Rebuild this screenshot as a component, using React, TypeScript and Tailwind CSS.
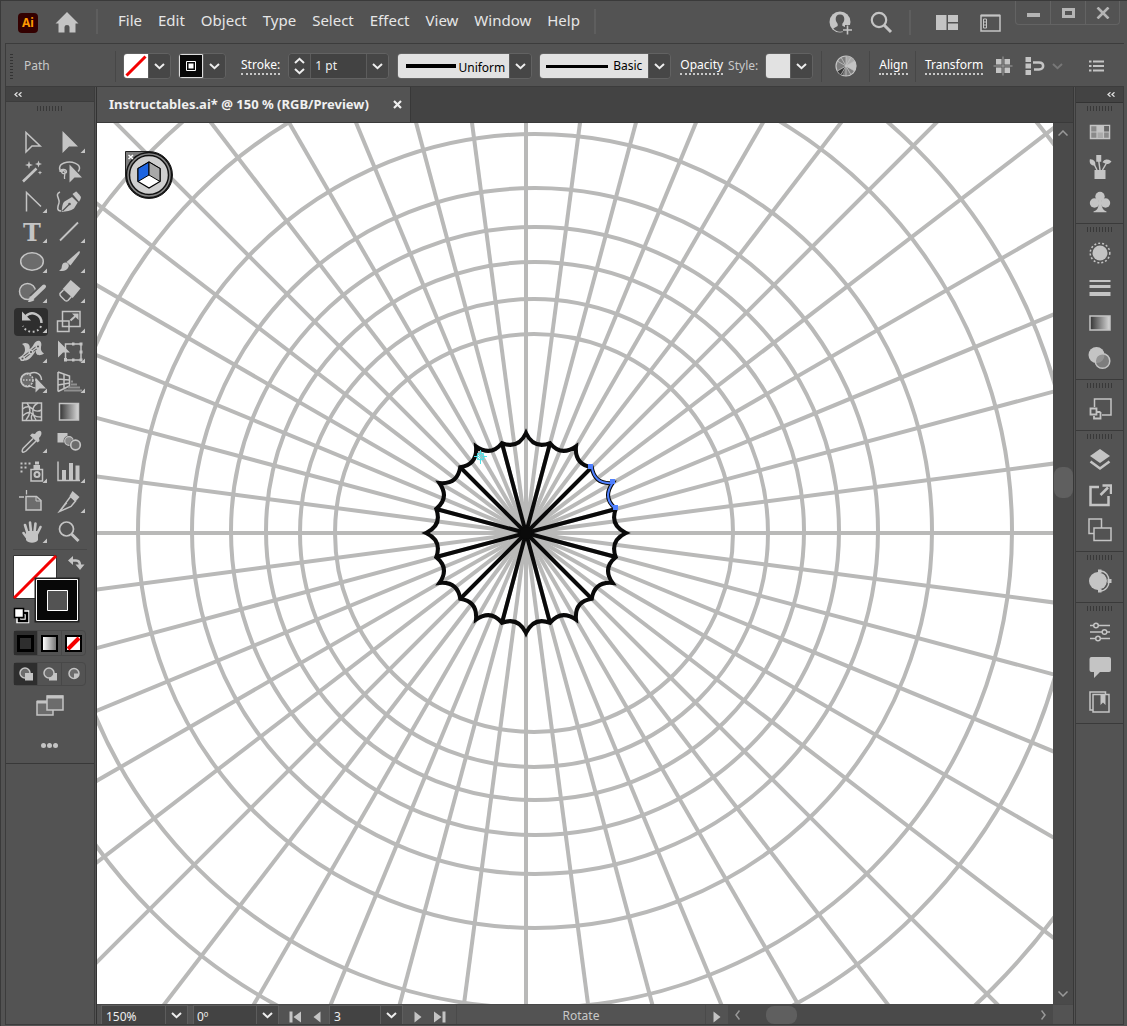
import React from "react";

const FONT = "font-['Noto_Sans','Open_Sans',sans-serif]";
const C = "#c4c4c4";

type P = { children?: React.ReactNode };

function Svg({ w, h, children }: P & { w: number; h: number }) {
  return (
    <svg width={w} height={h} viewBox={`0 0 ${w} ${h}`} fill="none" stroke={C} strokeWidth={1.5} className="block shrink-0" aria-hidden="true">
      {children}
    </svg>
  );
}

function Chevron({ dim = false }: { dim?: boolean }) {
  return (
    <svg width="11" height="7" viewBox="0 0 11 7" fill="none" stroke={dim ? "#777" : "#eee"} strokeWidth="2" className="block shrink-0" aria-hidden="true">
      <path d="M1 1l4.500 4.200L10 1" />
    </svg>
  );
}

function Drop({ label }: { label: string }) {
  return (
    <button aria-label={label} className="flex h-full w-[22px] shrink-0 items-center justify-center border-l border-[#5c5c5c] bg-[#464646]">
      <Chevron />
    </button>
  );
}

/* ---------- title bar ---------- */

const menus = ["File", "Edit", "Object", "Type", "Select", "Effect", "View", "Window", "Help"];

function TitleBar() {
  return (
    <header className="flex h-[42px] shrink-0 items-start pl-[17px]">
      <div className="mt-3 flex h-5 w-5 items-center justify-center rounded bg-[#330000] text-xs font-bold text-[#ff9a00]">Ai</div>
      <button aria-label="Home" className="mt-[11px] ml-[17px]">
        <Svg w={24} h={21}>
          <path d="M12 0L0.500 11.500H3.500V20.500H9.500V15Q9.500 13 12 13T14.500 15V20.500H20.500V11.500H23.500Z" fill={C} stroke="none" />
        </Svg>
      </button>
      <div className="mt-2 ml-[17px] h-[25px] w-0.5 bg-[#5e5e5e]" />
      <nav className="mt-[9px] ml-5 flex gap-4 text-[15px] leading-5 text-[#e6e6e6]">
        {menus.map((m) => (
          <button key={m}>{m}</button>
        ))}
      </nav>
      <div className="mt-2 ml-[14px] h-[25px] w-0.5 bg-[#5e5e5e]" />
      <div className="flex-1" />
      <div className="mt-[9px] flex items-center">
        <button aria-label="Account">
          <Svg w={24} h={24}>
            <circle cx="11" cy="11" r="10.500" fill={C} stroke="none" />
            <path d="M11 3.500c-3 0-4.300 2-4.300 4.600 0 2.200 1 3.500 2 4.800v2L4.300 17.500c1.500 2 4 3.200 6.700 3.200s4-1 5-2V16l-2.700-1.200v-2c1-1.200 2-2.600 2-4.700 0-2.600-1.300-4.600-4.300-4.600z" fill="#535353" stroke="none" />
            <path d="M18.500 14v9.500M13.800 18.700h9.400" stroke="#535353" strokeWidth="5" />
            <path d="M18.500 14.500v9M14 19h9" strokeWidth="1.600" />
          </Svg>
        </button>
        <button aria-label="Search" className="ml-[17px]">
          <Svg w={23} h={23}>
            <circle cx="9" cy="9" r="7.200" strokeWidth="2.200" />
            <path d="M14 14l7 7" strokeWidth="3" />
          </Svg>
        </button>
        <div className="ml-4 h-[25px] w-0.5 bg-[#5e5e5e]" />
        <button aria-label="Arrange documents" className="ml-[25px]">
          <Svg w={22} h={15}>
            <path d="M0 0h10.500v15H0zM12 0h10v7H12zM12 8.500h10V15H12z" fill={C} stroke="none" />
          </Svg>
        </button>
        <button aria-label="Workspace" className="ml-[22px]">
          <Svg w={21} h={18}>
            <path d="M1 1.500h19v15.500H1z" strokeWidth="1.500" />
            <path d="M1 1.500h19" strokeWidth="2" />
            <path d="M3.500 5h3v9h-3z" strokeWidth="1" />
            <path d="M3.500 8h3M3.500 11h3" strokeWidth="1" />
          </Svg>
        </button>
      </div>
      <div className="mr-[7px] ml-[14px] flex h-6 rounded-b border border-t-0 border-[#636363]">
        <button aria-label="Minimize" className="flex w-[35px] items-center justify-center border-r border-[#636363]">
          <span className="mt-1 h-1 w-[13px] bg-[#b4b4b4]" />
        </button>
        <button aria-label="Maximize" className="flex w-[35px] items-center justify-center border-r border-[#636363]">
          <span className="h-[10px] w-[13px] border-[3px] border-[#b4b4b4]" />
        </button>
        <button aria-label="Close" className="flex w-[33px] items-center justify-center">
          <Svg w={14} h={12}>
            <path d="M1.500 0.500l11 11M12.500 0.500l-11 11" stroke="#b4b4b4" strokeWidth="2.600" />
          </Svg>
        </button>
      </div>
    </header>
  );
}

/* ---------- control bar ---------- */

const box = "flex h-[26px] shrink-0 overflow-hidden rounded-sm border border-[#626262]";
const dotted = "border-b-2 border-dotted border-[#c8c8c8] leading-4 text-white";
const sep = "h-[31px] w-px shrink-0 bg-[#474747]";

function ControlBar() {
  return (
    <div className="flex h-[43px] shrink-0 items-center overflow-hidden border-b border-[#3c3c3c] pt-0.5 pl-1 text-xs text-[#c8c8c8]">
      <div className="flex w-[3px] flex-col gap-0.5">
        {Array.from({ length: 9 }, (_, i) => (
          <i key={i} className="h-px w-[3px] bg-[#333]" />
        ))}
      </div>
      <span className="ml-[11px] w-[91px] text-xs">Path</span>
      <div className={sep} />
      <div className={`${box} ml-[7px]`}>
        <button aria-label="Fill">
          <Svg w={24} h={24}>
            <path d="M0 0h24v24H0z" fill="#fff" stroke="none" />
            <path d="M2.500 21.500L21.500 2.500" stroke="#f40000" strokeWidth="3" />
          </Svg>
        </button>
        <Drop label="Fill options" />
      </div>
      <div className={`${box} ml-[7px]`}>
        <button aria-label="Stroke color">
          <Svg w={24} h={24}>
            <path d="M0.500 0.500h23v23H0.500z" fill="#080808" stroke="#ddd" strokeWidth="1" />
            <path d="M7.500 7.500h9v9h-9z" stroke="#fff" strokeWidth="1" />
            <path d="M9.500 9.500h5v5h-5z" fill="#fff" stroke="none" />
          </Svg>
        </button>
        <Drop label="Stroke color options" />
      </div>
      <button className={`ml-[15px] ${dotted}`}>Stroke:</button>
      <div className={`${box} ml-2`}>
        <button aria-label="Stepper" className="flex w-[21px] flex-col items-center justify-center gap-1 bg-[#464646]">
          <span className="rotate-180"><Chevron /></span>
          <Chevron />
        </button>
        <input aria-label="Stroke weight" defaultValue="1 pt" className="w-[56px] border-l border-[#5c5c5c] bg-[#424242] pl-1 text-xs text-[#eee] outline-none" />
        <Drop label="Stroke weight options" />
      </div>
      <div className={`${box} ml-2`}>
        <button className="flex w-[111px] items-center justify-between bg-[#e2e2e2] pr-1 pl-2 text-xs text-black">
          <i className="h-1 w-[50px] bg-black" />
          <span className="pt-1">Uniform</span>
        </button>
        <Drop label="Width profile" />
      </div>
      <div className={`${box} ml-[7px]`}>
        <button className="flex w-[108px] items-center justify-between bg-[#e2e2e2] pr-[6px] pl-[6px] text-xs text-black">
          <i className="h-[3px] w-[62px] bg-black" />
          <span>Basic</span>
        </button>
        <Drop label="Brush definition" />
      </div>
      <button className={`ml-[9px] ${dotted}`}>Opacity</button>
      <span className="ml-[5px]">Style:</span>
      <div className={`${box} ml-[7px]`}>
        <button aria-label="Graphic style" className="w-6 bg-[#e2e2e2]" />
        <Drop label="Graphic style options" />
      </div>
      <div className={`${sep} ml-2`} />
      <button aria-label="Recolor artwork" className="ml-[13px]">
        <Svg w={22} h={22}>
          <circle cx="11" cy="11" r="10" fill="#7d7d7d" strokeWidth="1.200" />
          <path d="M11 11V1a10 10 0 0 1 8.700 5z" fill="#aaa" stroke="none" />
          <path d="M11 11L19.700 6a10 10 0 0 1 0 10z" fill="#c4c4c4" stroke="none" />
          <path d="M11 11L2.300 16a10 10 0 0 0 5 4.200z" fill="#383838" stroke="none" />
          <path d="M11 1v20M2.300 6l17.400 10M2.300 16L19.700 6M6 2.300l10 17.400M16 2.300L6 19.700" strokeWidth="0.800" />
        </Svg>
      </button>
      <div className={`${sep} ml-3`} />
      <button className={`ml-[9px] ${dotted}`}>Align</button>
      <div className={`${sep} ml-[7px]`} />
      <button className={`ml-[9px] ${dotted}`}>Transform</button>
      <button aria-label="Isolate" className="ml-[10px]">
        <Svg w={20} h={20}>
          <path d="M3 3h5.500v5.500H3zM11.500 3H17v5.500h-5.500zM3 11.500h5.500V17H3zM11.500 11.500H17V17h-5.500z" fill={C} stroke="none" />
          <path d="M10 0.500v19M0.500 10h19" stroke="#a0a0a0" strokeWidth="1" />
        </Svg>
      </button>
      <button aria-label="Select similar" className="ml-3 flex items-center">
        <Svg w={20} h={20}>
          <path d="M0.500 1h5.500v5H0.500zM0.500 7.500h5.500v5H0.500zM0.500 14h5.500v5H0.500z" fill={C} stroke="none" />
          <path d="M8 6.500h6c5.500 0 5.500 7 0 7h-5" strokeWidth="2.600" />
        </Svg>
        <span className="ml-[7px]"><Chevron dim /></span>
      </button>
      <button aria-label="Panel menu" className="mr-[20px] ml-auto">
        <Svg w={15} h={12}>
          <path d="M0 1.500h2.500M0 6h2.500M0 10.500h2.500M4 1.500h11M4 6h11M4 10.500h11" strokeWidth="2" />
        </Svg>
      </button>
    </div>
  );
}

/* ---------- tools ---------- */

const tools: { name: string; art: React.ReactNode; more?: boolean; on?: boolean }[] = [
  { name: "Selection", art: <path d="M12 4.500V24l6-6h8.200z" /> },
  { name: "Direct selection", more: true, art: <path d="M10.500 3v22l6.500-6.500h9z" fill={C} stroke="none" /> },
  {
    name: "Magic wand",
    art: (
      <>
        <path d="M9 23.500L22.500 10.500" strokeWidth="2.600" />
        <path d="M15 3l1 3 3 1-3 1-1 3-1-3-3-1 3-1zM24.500 2.500l.9 2.600 2.600.9-2.600.9-.9 2.600-.9-2.600-2.600-.9 2.600-.9zM26 12.500l.6 1.500 1.500.6-1.500.6-.6 1.500-.6-1.500-1.500-.6 1.500-.6z" fill={C} stroke="none" />
      </>
    ),
  },
  {
    name: "Lasso",
    art: (
      <>
        <path d="M10 14c-3.500-2-3.500-7 2-9 8-2.500 16 1 15.500 5.500-.2 1.500-.8 2.500-1.500 3" />
        <path d="M8 14c0-3 6-3.500 6.500-.5.200 2-4.500 3-4.700.7-.2-2 3.500-1.500 3.300.5-.3 2.500-1 3-.5 6.300" strokeWidth="1.300" />
        <path d="M17.500 6.500v18l5-5h7.500z" fill={C} stroke="none" />
      </>
    ),
  },
  { name: "Pen", more: true, art: <path d="M12.500 23.500v-19l14.500 14" /> },
  {
    name: "Curvature",
    art: (
      <>
        <path d="M8 4C2 6.500 8.500 11 7 15S4.500 23 9 23" />
        <path d="M9.700 24C10 19 10.500 15 12.500 13.500L20 9l5.700 5.500L22 20.500C19 23 14 23.500 9.700 24z" fill={C} stroke="none" />
        <path d="M20.500 6L24 3.500q1 0 5 5.500 0 2-2 4.700z" fill={C} stroke="none" />
        <path d="M10.500 23l6.500-6.500" stroke="#535353" strokeWidth="1.200" />
        <circle cx="17.500" cy="16" r="1.300" fill="#535353" stroke="none" />
      </>
    ),
  },
  {
    name: "Type",
    more: true,
    art: (
      <text x="18" y="22.500" textAnchor="middle" fontFamily="'DejaVu Serif', serif" fontWeight="bold" fontSize="24" fill={C} stroke="none">T</text>
    ),
  },
  { name: "Line segment", more: true, art: <path d="M8 22.500L26 4.500" strokeWidth="1.800" /> },
  { name: "Ellipse", more: true, art: <ellipse cx="18" cy="13.500" rx="11.300" ry="8.700" fill="#6c6c6c" /> },
  {
    name: "Paintbrush",
    more: true,
    art: (
      <>
        <path d="M26.500 3.500c2-.6 1.700.8.500 2.800L18.500 17.500l-4-3.500z" fill={C} stroke="none" />
        <path d="M13.500 14.500c2.500 0 4 2.500 3 4.500-1.500 3.500-5.500 5-9.500 3.500 3-1 2.500-3 3-5 .500-1.800 1.500-3 3.500-3z" fill={C} stroke="none" />
      </>
    ),
  },
  {
    name: "Blob brush",
    more: true,
    art: (
      <>
        <circle cx="13.500" cy="13.500" r="8" fill="#6c6c6c" />
        <path d="M30 8.500L18 20.500" stroke="#535353" strokeWidth="8" />
        <path d="M30 8.500L18.500 19.500" strokeWidth="4" strokeLinecap="round" />
        <path d="M14 24l2-6 4.500 4c-2 1.500-4 2-6.500 2z" fill={C} stroke="none" />
      </>
    ),
  },
  {
    name: "Eraser",
    more: true,
    art: (
      <>
        <path d="M18.700 2l9.800 8.500-7.800 9.500-10-9z" fill={C} stroke="none" />
        <path d="M11.500 12L8 15.500q-.5 1.500 1 3l4 4q1.500 1 3 0l3.500-4" />
      </>
    ),
  },
  {
    name: "Rotate",
    more: true,
    on: true,
    art: (
      <>
        <path d="M11.500 8.500c6-6.500 16-2 16 6.500" strokeWidth="2.400" />
        <path d="M8 3.500v9h9z" fill={C} stroke="none" />
        <path d="M27 18c-2.500 7.500-14.500 8-18 0" strokeWidth="2" strokeDasharray="1.800 2.600" />
      </>
    ),
  },
  {
    name: "Scale",
    more: true,
    art: (
      <>
        <path d="M10.500 3.500h17.500v15H10.500zM5.500 13h11.500v10.500H5.500z" />
        <path d="M18.500 12.500l5-4.500" strokeWidth="2" />
        <path d="M20 5.500h6.500V12z" fill={C} stroke="none" />
      </>
    ),
  },
  {
    name: "Width",
    more: true,
    art: (
      <>
        <path d="M8 6c5-3 9 1 7.500 5 3-1 4-5 6-7 4-3 7 0 5.500 5-.5 3 .5 5 3 6.500-4 3-9 2-8-3-3 5-6 9-10 10-2 .5-4-1-3-3-2 1.500-4 1.500-5 .5 4-1.500 7-5 7-8 0-3-1-5-3-6z" fill={C} stroke="none" />
        <path d="M9 20L24 8.500" stroke="#535353" strokeWidth="3" />
        <path d="M9 20L24 8.500" strokeWidth="1.300" />
        <circle cx="8.500" cy="20.500" r="1.800" fill="#535353" />
        <circle cx="17" cy="14" r="1.800" fill="#535353" />
        <circle cx="24" cy="8.500" r="1.800" fill="#535353" />
      </>
    ),
  },
  {
    name: "Free transform",
    more: true,
    art: (
      <>
        <path d="M13.500 6h15.500v16H13.500z" />
        <path d="M12 20h3v3.500h-3zM27.500 20.500h3v3h-3zM27.500 4.500h3v3h-3zM20 4.500h2.500v3H20zM20 20.500h2.500v3H20zM27.500 12.500h3v3h-3z" fill={C} stroke="none" />
        <path d="M6 2.500v17l5-5h7z" fill={C} stroke="none" />
      </>
    ),
  },
  {
    name: "Shape builder",
    more: true,
    art: (
      <>
        <circle cx="13" cy="12" r="6" fill="#6c6c6c" strokeDasharray="2 1" />
        <path d="M16 5.500c6-3 11.500 1 11.500 6.500M16.500 18c2 1.500 3.500 2 5 2M16 5.500c-4-1-9 1-9 6.500s5 8 9.500 6" />
        <path d="M9 12h13" strokeDasharray="1.500 1.500" />
        <path d="M21.500 9.500v15l4-4h6.500z" fill={C} stroke="none" />
      </>
    ),
  },
  {
    name: "Perspective grid",
    more: true,
    art: (
      <>
        <path d="M6 4v19.500M6 4l11.500 4v10L6 23.500M12 6v14.500M6 11l11.500 1M6 17l11.500-2" />
        <path d="M19 13.500h2M19 16.500h6M16 19.500h12M12 22.500h18" stroke="#909090" strokeWidth="2" />
      </>
    ),
  },
  {
    name: "Mesh",
    art: (
      <>
        <path d="M8.500 5h19v17.500h-19z" />
        <path d="M8.500 11c5-4 8-2 10 0s5 3 9 1M8.500 18c4-4 7-5 10-2s5 3 9 3M13 5c5 6 3 12-1 17M24 5c-6 3-7 9-2 17M19 16c-2 1-2 4-1 6" strokeWidth="1.400" />
      </>
    ),
  },
  { name: "Gradient", art: <path d="M7.500 5.500h19v16.500h-19z" fill="url(#ramp)" /> },
  {
    name: "Eyedropper",
    more: true,
    art: (
      <>
        <path d="M19 10.500L9 20.500c-2 4 0 4.500 3 2.500l10-10" />
        <path d="M21 6c2-3 5-4 6-2.500s.5 4-2 6.500l.5 3-2 1.500-7.500-7 2-2z" fill={C} stroke="none" />
      </>
    ),
  },
  {
    name: "Blend",
    art: (
      <>
        <path d="M5.500 5h10v9.500h-10z" fill={C} stroke="none" />
        <circle cx="17" cy="13" r="5.500" fill="#535353" stroke="none" />
        <circle cx="17" cy="13" r="4.300" fill="#8a8a8a" strokeWidth="1.200" />
        <circle cx="23.500" cy="17" r="6" fill="#535353" stroke="none" />
        <circle cx="23.500" cy="17" r="4.800" fill="#6c6c6c" strokeWidth="1.700" />
      </>
    ),
  },
  {
    name: "Symbol sprayer",
    more: true,
    art: (
      <>
        <path d="M17 11.500h11.500V23H17z" />
        <path d="M19.500 7h6.500v5h-6.500zM21 3.500h4v3h-4z" fill={C} stroke="none" />
        <circle cx="23" cy="16.500" r="2.500" strokeWidth="2" />
        <path d="M6.500 5.500h10M6.500 9.500h6M6.500 13.500h2" strokeDasharray="2 2" strokeWidth="2" />
      </>
    ),
  },
  {
    name: "Column graph",
    more: true,
    art: (
      <>
        <path d="M6 3.500v19h22" />
        <path d="M10 12h4v10h-4zM17 5h4v17h-4zM23.500 7.500h4V22h-4z" fill={C} stroke="none" />
      </>
    ),
  },
  {
    name: "Artboard",
    art: (
      <>
        <path d="M12 8.500h10.500l4.500 4v9.500H12z" fill="#6c6c6c" />
        <path d="M12.500 2v4.500M5 9h5" strokeWidth="1.300" />
        <path d="M22 8.500v4.500h5" strokeWidth="1" />
      </>
    ),
  },
  {
    name: "Slice",
    more: true,
    art: (
      <>
        <path d="M18.500 8.500l5 4.500-4.500 5.500L7.500 23.500z" />
        <path d="M20.500 3l7 6-4 4.500-6-5.500z" fill={C} stroke="none" />
        <path d="M8 23l7-8" strokeWidth="1" />
      </>
    ),
  },
  {
    name: "Hand",
    more: true,
    art: (
      <>
        <path d="M12 13v9c2 3.500 10 3.500 12 0v-9z" fill={C} stroke="none" />
        <path d="M13.500 15L11 7M17 14L16 4.500M20.500 14L21.500 5.500M23 16l3.500-7M14 21l-4.500-6" strokeWidth="2.600" strokeLinecap="round" />
      </>
    ),
  },
  {
    name: "Zoom",
    art: (
      <>
        <circle cx="14.500" cy="11" r="7" strokeWidth="1.700" />
        <path d="M19.500 16l7 7" strokeWidth="3" />
      </>
    ),
  },
];

function Grip() {
  return (
    <div className="flex justify-center gap-px">
      {Array.from({ length: 9 }, (_, i) => (
        <i key={i} className="mr-px h-[5px] w-px bg-[#383838]" />
      ))}
    </div>
  );
}

function Collapse() {
  return (
    <svg width="8" height="5" viewBox="0 0 8 5" fill="none" stroke="#ddd" strokeWidth="1.300" className="block" aria-hidden="true">
      <path d="M3.500 0.300L1 2.500l2.500 2.200M7.500 0.300L5 2.500l2.500 2.200" />
    </svg>
  );
}

function ToolPanel() {
  return (
    <aside className="flex w-[89px] shrink-0 flex-col border-r border-[#3c3c3c]">
      <div className="flex h-[15px] shrink-0 items-center border-b border-[#3c3c3c] bg-[#434343] pl-2">
        <button aria-label="Collapse tools"><Collapse /></button>
      </div>
      <div className="border-b border-[#383838] px-[7px] pt-1 pb-[15px]">
        <Grip />
        <div className="mt-[17px] grid grid-cols-[34px_34px] gap-x-1 gap-y-0.5 pl-px">
          {tools.map((t) => (
            <button key={t.name} aria-label={t.name} className={t.on ? "rounded-sm bg-[#2e2e2e]" : ""}>
              <Svg w={34} h={28}>
                {t.art}
                {t.more && <path d="M33 20.500v4.500h-4.500z" fill={C} stroke="none" />}
              </Svg>
            </button>
          ))}
        </div>
        <div className="mt-[3px] h-px bg-[#484848]" />
        <button aria-label="Fill and stroke" className="mt-[5px] block">
          <Svg w={74} h={70}>
            <path d="M0.500 0.500h43v43h-43z" fill="#fff" stroke="#333" strokeWidth="1" />
            <path d="M1 43L43 1" stroke="#f40000" strokeWidth="3" />
            <path d="M22.500 23.500h43v43h-43z" fill="#080808" stroke="#222" strokeWidth="2" />
            <path d="M23.500 24.500h41v41h-41z" stroke="#fff" strokeWidth="1" />
            <path d="M34.500 35.500h20v20h-20z" fill="#535353" stroke="#fff" strokeWidth="1" />
            <path d="M59 5.500h4c3 0 4 2 4 5" strokeWidth="2.400" />
            <path d="M60 1v9l-5-4.500zM62.500 9.500h9L67 15z" fill={C} stroke="none" />
            <path d="M5.500 57.500h8.500v8.500H5.500z" stroke="#fff" strokeWidth="4.500" />
            <path d="M6 58h8v8H6z" stroke="#000" strokeWidth="2.500" />
            <path d="M1.500 53.500h9v9h-9z" fill="#fff" stroke="#000" strokeWidth="1.500" />
          </Svg>
        </button>
        <div className="mt-[5px] flex h-[26px] w-[73px] rounded-sm border border-[#484848]">
          <button aria-label="Color" className="flex w-[23px] items-center justify-center bg-[#2e2e2e]">
            <span className="h-[17px] w-[17px] border-[3px] border-black bg-[#2e2e2e]" />
          </button>
          <button aria-label="Gradient fill" className="flex flex-1 items-center justify-center border-x border-[#484848]">
            <span className="h-[17px] w-[17px] border-2 border-black bg-linear-to-r from-white to-[#777]" />
          </button>
          <button aria-label="None" className="flex w-[23px] items-center justify-center">
            <Svg w={17} h={17}>
              <path d="M1 1h15v15H1z" fill="#fff" stroke="#000" strokeWidth="2" />
              <path d="M3 14L14 3" stroke="#f40000" strokeWidth="4" />
            </Svg>
          </button>
        </div>
        <div className="mt-[6px] flex h-6 w-[73px] rounded-sm border border-[#484848]">
          <button aria-label="Draw normal" className="flex w-[23px] items-center justify-center bg-[#2e2e2e]">
            <Svg w={14} h={14}>
              <circle cx="6" cy="6" r="5" fill="#6c6c6c" />
              <path d="M6 6h8v7.500H6z" fill={C} stroke="none" />
            </Svg>
          </button>
          <button aria-label="Draw behind" className="flex flex-1 items-center justify-center border-x border-[#484848]">
            <Svg w={14} h={14}>
              <path d="M6 6h8v7.500H6z" fill={C} stroke="none" />
              <circle cx="6" cy="6" r="5" fill="#6c6c6c" />
            </Svg>
          </button>
          <button aria-label="Draw inside" className="flex w-[23px] items-center justify-center">
            <Svg w={12} h={14}>
              <circle cx="6" cy="6.500" r="5" fill="#6c6c6c" />
              <path d="M6 6.500h5a5 5 0 0 1-5 5z" fill={C} stroke="none" />
            </Svg>
          </button>
        </div>
        <button aria-label="Screen mode" className="mt-[9px] ml-[23px] block">
          <Svg w={28} h={21}>
            <path d="M1 6.500h16V20H1z" fill="#6c6c6c" />
            <path d="M1 7h16" strokeWidth="3" />
            <path d="M11 1h16v14H11z" fill="#6c6c6c" />
            <path d="M11 2h16" strokeWidth="3" />
          </Svg>
        </button>
        <button aria-label="Edit toolbar" className="mt-[27px] ml-[28px] flex gap-px">
          <i className="h-[5px] w-[5px] rounded-full bg-[#c4c4c4]" />
          <i className="h-[5px] w-[5px] rounded-full bg-[#c4c4c4]" />
          <i className="h-[5px] w-[5px] rounded-full bg-[#c4c4c4]" />
        </button>
      </div>
    </aside>
  );
}

/* ---------- artwork ---------- */

const CX = 526;
const CY = 533;
const rings = [
  { r: 199, cx: 534, cy: 533 },
  { r: 234, cx: 534, cy: 533 },
  { r: 269, cx: 535, cy: 531 },
  { r: 304, cx: 535, cy: 531 },
  { r: 343, cx: 535, cy: 531 },
  { r: 397, cx: 535, cy: 531 },
  { r: 477, cx: 535, cy: 531 },
  { r: 540, cx: 535, cy: 531 },
  { r: 647, cx: 535, cy: 531 },
];
const rays = Array.from({ length: 48 }, (_, i) => i * 7.5);
const at = (deg: number, r: number) => {
  const a = (deg * Math.PI) / 180;
  return `${(CX + r * Math.sin(a)).toFixed(1)} ${(CY - r * Math.cos(a)).toFixed(1)}`;
};
/* Each spike dips into a shallow curve that ends on the spokes 15 degrees to either side. */
const fall = (d: number) => `C${at(d + 3, 90)} ${at(d + 8, 86)} ${at(d + 15, 93)}`;
const rise = (d: number) => `C${at(d + 7, 86)} ${at(d + 12, 90)} ${at(d + 15, 100)}`;
const scallop = Array.from({ length: 12 }, (_, i) => fall(i * 30) + rise(i * 30 + 15)).join("");

function Artwork() {
  return (
    <svg viewBox="97 123 956 881" preserveAspectRatio="xMidYMid slice" className="block h-full w-full bg-white" fill="none" role="img" aria-label="Artboard">
      <g stroke="#b9b9b8" strokeWidth="4">
        {rings.map((o) => (
          <circle key={o.r} cx={o.cx} cy={o.cy} r={o.r} />
        ))}
        {rays.map((d) => (
          <path key={d} d={`M${CX} ${CY}L${at(d, 760)}`} />
        ))}
      </g>
      <g stroke="#0a0a0a" strokeWidth="4">
        {[15, 45, 75, 105, 135, 165, 195, 225, 255, 285, 315, 345].map((d) => (
          <path key={d} d={`M${CX} ${CY}L${at(d, 92)}`} />
        ))}
        <path d={`M${at(0, 100)}${scallop}Z`} strokeMiterlimit="6" />
        <circle cx={CX} cy={CY} r="6" fill="#0a0a0a" stroke="none" />
      </g>
      <path d={`M${at(45, 93)}${rise(45)}${fall(60)}`} stroke="#4f80ff" strokeWidth="2" />
      <path d="M588 464h5v5h-5zM610 479h5v5h-5zM613 505h5v5h-5z" fill="#4f80ff" />
      <g stroke="#4be3ea" strokeWidth="1">
        <circle cx="480.500" cy="456.500" r="3.500" />
        <path d="M480.500 450v5M480.500 458v6M474 456.500h5M482 456.500h5" />
        <path d="M477 453l7 7M484 453l-7 7" strokeWidth="0.800" />
      </g>
      <g>
        <path d="M125.500 151.500H149a23.500 23.500 0 1 1-23.500 23.500z" fill="#7c7c7c" stroke="#222" />
        <circle cx="149" cy="175" r="22.500" fill="#858585" stroke="#111" strokeWidth="1.500" />
        <circle cx="149" cy="175" r="19.500" fill="#cfcfcf" stroke="#111" strokeWidth="1.500" />
        <path d="M149 162l11 6.500v13L149 188l-11-6.500v-13z" fill="#fff" stroke="#000" strokeWidth="1.300" />
        <path d="M138 168.500l11-6.500v13l-11 6.500z" fill="#1d64e0" stroke="#000" />
        <path d="M149 162l11 6.500v13L149 175z" fill="#a8a8a8" stroke="#000" />
        <path d="M128.500 155l4.500 4M133 155l-4.500 4" stroke="#fff" strokeWidth="1.500" />
      </g>
    </svg>
  );
}

/* ---------- right dock ---------- */

const groups: { name: string; art: React.ReactNode }[][] = [
  [
    {
      name: "Swatches",
      art: (
        <>
          <path d="M2.500 5.500h19v13h-19z" fill="#8a8a8a" />
          <path d="M9 6h6v6H9z" fill={C} stroke="none" />
          <path d="M9 12h6v6H9z" fill="#aaa" stroke="none" />
          <path d="M16 6h5v6h-5z" fill="#666" stroke="none" />
          <path d="M2.500 12h19M9 6v12M15.500 6v12" strokeWidth="1.200" />
        </>
      ),
    },
    {
      name: "Brushes",
      art: (
        <>
          <path d="M6.500 15h11v9h-11z" fill={C} stroke="none" />
          <path d="M9 15L5.500 8M12 15L10.500 4M14.500 15l4-7" />
          <path d="M2.500 5c3 0 4.500 2 4 5-3 0-4.500-2-4-5zM9 0.500h3.500V6H9zM15.500 7c1-2 4-2.500 7-.5-1 2-4 2.500-7 .5z" fill={C} stroke={C} />
        </>
      ),
    },
    {
      name: "Symbols",
      art: (
        <>
          <circle cx="12" cy="6.500" r="4.700" fill={C} stroke="none" />
          <circle cx="6.500" cy="13" r="4.700" fill={C} stroke="none" />
          <circle cx="17.500" cy="13" r="4.700" fill={C} stroke="none" />
          <path d="M10.500 9h3v5c.3 4 2 6.500 5 7.500v.8h-13v-.8c3.500-1 5-3.500 5-7.500z" fill={C} stroke="none" />
        </>
      ),
    },
  ],
  [
    {
      name: "Appearance",
      art: (
        <>
          <circle cx="12" cy="12" r="7.500" fill={C} stroke="none" />
          <circle cx="12" cy="12" r="9.800" strokeDasharray="2 2" />
        </>
      ),
    },
    {
      name: "Stroke",
      art: (
        <>
          <path d="M1.500 5h21" strokeWidth="2" />
          <path d="M1.500 10.500h21" strokeWidth="3" />
          <path d="M1.500 18h21" strokeWidth="4" />
        </>
      ),
    },
    { name: "Gradient panel", art: <path d="M2 5h20v14H2z" fill="url(#ramp)" /> },
    {
      name: "Transparency",
      art: (
        <>
          <circle cx="8.500" cy="9" r="8" fill={C} stroke="none" />
          <circle cx="14.500" cy="15" r="7.300" fill="#888" fillOpacity="0.800" />
        </>
      ),
    },
  ],
  [
    {
      name: "Export",
      art: (
        <>
          <path d="M6.500 10V2h16.500v16H14" />
          <path d="M2.500 11.500h6v6h-6zM12.500 15v6.500H6V19M9 15h3.500" strokeWidth="1.800" />
        </>
      ),
    },
  ],
  [
    {
      name: "Layers",
      art: (
        <>
          <path d="M12 1l10 7-10 7L2 8z" fill={C} stroke="none" />
          <path d="M2.500 13.500L12 20.500l9.500-7" strokeWidth="2.600" />
        </>
      ),
    },
    {
      name: "Asset export",
      art: (
        <>
          <path d="M11 4H2.500v18h18v-9" strokeWidth="2.500" />
          <path d="M12.500 12L20 4.500" strokeWidth="2.500" />
          <path d="M14.500 2.500h8.500V11" strokeWidth="2.500" />
        </>
      ),
    },
    {
      name: "Artboards",
      art: (
        <>
          <path d="M6 15.500H1V1h12.500v9" />
          <path d="M6 10h17v12.500H6z" />
        </>
      ),
    },
  ],
  [
    {
      name: "Pathfinder",
      art: (
        <>
          <circle cx="10" cy="12" r="9" fill={C} stroke="none" />
          <path d="M12 2c6 0 9 5 9 10s-3 10-9 10" stroke="#535353" strokeWidth="4" />
          <path d="M12 2c6 0 9 5 9 10s-3 10-9 10" />
          <path d="M10 0.500h3.500V4H10zM10 20h3.500v3.500H10zM19.500 10h4v4h-4z" fill={C} stroke="none" />
        </>
      ),
    },
  ],
  [
    {
      name: "Properties",
      art: (
        <>
          <path d="M2 5.500h20M2 12h20M2 18.500h20" />
          <circle cx="8" cy="5.500" r="2.300" fill="#535353" />
          <circle cx="16.500" cy="12" r="2.300" fill="#535353" />
          <circle cx="10" cy="18.500" r="2.300" fill="#535353" />
        </>
      ),
    },
    {
      name: "Comments",
      art: <path d="M3.500 2h17.500q2 0 2 2v11q0 2-2 2H12l-6 6v-6H3.500q-2 0-2-2V4q0-2 2-2z" fill={C} stroke="none" />,
    },
    {
      name: "Libraries",
      art: (
        <>
          <path d="M5 20H2V2h15.500v2" />
          <path d="M5 4.500h16V22H5z" />
          <path d="M12.500 4.500h5V15L15 12.500 12.500 15z" fill={C} stroke="none" />
        </>
      ),
    },
  ],
];

function Dock() {
  return (
    <aside className="flex w-[49px] shrink-0 flex-col border-x border-[#3c3c3c]">
      <div className="flex h-4 shrink-0 items-center justify-end border-b border-[#333] bg-[#434343] pr-2">
        <button aria-label="Expand panels"><Collapse /></button>
      </div>
      {groups.map((g, i) => (
        <section key={i} className="border-b border-[#3a3a3a] pb-1">
          <div className="h-[11px] pt-[3px]"><Grip /></div>
          {g.map((p) => (
            <button key={p.name} aria-label={p.name} className="flex h-[35px] w-full items-center justify-center">
              <Svg w={24} h={24}>{p.art}</Svg>
            </button>
          ))}
        </section>
      ))}
    </aside>
  );
}

/* ---------- status bar ---------- */

const cell = "flex h-full shrink-0 border border-b-0 border-[#5e5e5e]";
const field = "bg-[#434343] pt-[3px] text-xs leading-[14px] text-[#eee] outline-none";

function StatusBar() {
  return (
    <footer className="flex h-[20px] shrink-0 overflow-hidden border-t border-[#484848] pl-1 text-xs text-[#c8c8c8]">
      <div className={cell}>
        <input aria-label="Zoom level" defaultValue="150%" className={`${field} w-[63px] pl-1`} />
        <Drop label="Zoom presets" />
      </div>
      <div className={`${cell} ml-[5px]`}>
        <input aria-label="Rotate view" defaultValue="0º" className={`${field} w-[62px] pl-[3px]`} />
        <Drop label="Rotation presets" />
      </div>
      <div className="ml-[10px] flex items-center gap-[11px] pt-1">
        <button aria-label="First artboard">
          <Svg w={13} h={12}><path d="M0.500 0.500h3v11h-3zM12 0.500v11L4.500 6z" fill={C} stroke="none" /></Svg>
        </button>
        <button aria-label="Previous artboard">
          <Svg w={8} h={12}><path d="M7.500 0.500v11L0.500 6z" fill={C} stroke="none" /></Svg>
        </button>
      </div>
      <div className={`${cell} ml-2`}>
        <input aria-label="Artboard number" defaultValue="3" className={`${field} w-[50px] pl-1`} />
        <Drop label="Artboard list" />
      </div>
      <div className="ml-[11px] flex items-center gap-[11px] pt-1">
        <button aria-label="Next artboard">
          <Svg w={8} h={12}><path d="M0.500 0.500v11L7.500 6z" fill={C} stroke="none" /></Svg>
        </button>
        <button aria-label="Last artboard">
          <Svg w={13} h={12}><path d="M9.500 0.500h3v11h-3zM1 0.500v11L8.500 6z" fill={C} stroke="none" /></Svg>
        </button>
      </div>
      <div className="ml-[10px] w-[250px] shrink-0 border-x border-[#4a4a4a] pt-[3px] text-center text-xs leading-4">Rotate</div>
      <button aria-label="Status menu" className="flex w-[22px] shrink-0 items-center justify-center pt-1">
        <Svg w={8} h={12}><path d="M0.500 0.500v11L7.500 6z" fill={C} stroke="none" /></Svg>
      </button>
      <div className="flex flex-1 items-center bg-[#4a4a4a] px-[7px]">
        <Svg w={5} h={10}><path d="M4.500 0.500L1 5l3.500 4.500" stroke="#999" /></Svg>
        <div className="ml-[26px] h-[18px] w-[31px] rounded-lg bg-[#5f5f5f]" />
        <div className="flex-1" />
        <Svg w={5} h={10}><path d="M0.500 0.500L4 5 0.500 9.500" stroke="#999" /></Svg>
      </div>
      <div className="w-5 shrink-0" />
    </footer>
  );
}

export default function App() {
  return (
    <div className={`flex h-screen flex-col overflow-hidden border-t border-l border-[#3a3a3a] bg-[#535353] ${FONT}`}>
      <svg width="0" height="0" className="absolute" aria-hidden="true">
        <linearGradient id="ramp">
          <stop offset="0" stopColor="#333" />
          <stop offset="1" stopColor="#d8d8d8" />
        </linearGradient>
      </svg>
      <TitleBar />
      <div className="mr-[3px] mb-px ml-1 flex min-h-0 flex-1 flex-col border border-r-0 border-[#3c3c3c]">
        <ControlBar />
        <div className="flex min-h-0 flex-1">
          <ToolPanel />
          <main className="ml-px flex min-w-0 flex-1 flex-col border-l border-[#333]">
            <div className="flex h-9 shrink-0 border-b border-[#3a3a3a] bg-[#434343]">
              <div className="flex w-[314px] items-center justify-between border-r border-[#383838] bg-[#535353] pr-2 pl-3 text-[13px] font-bold text-[#f0f0f0]">
                <span>Instructables.ai* @ 150 % (RGB/Preview)</span>
                <button aria-label="Close document">
                  <Svg w={9} h={9}><path d="M1 1l7 7M8 1l-7 7" stroke="#f0f0f0" strokeWidth="2.200" /></Svg>
                </button>
              </div>
            </div>
            <div className="flex min-h-0 flex-1">
              <div className="min-w-0 flex-1"><Artwork /></div>
              <div className="flex w-5 shrink-0 flex-col items-center bg-[#4a4a4a] py-[7px]">
                <Svg w={10} h={6}><path d="M0.500 5.500L5 1l4.500 4.500" stroke="#999" /></Svg>
                <div className="flex-[331]" />
                <div className="h-[31px] w-[19px] rounded-lg bg-[#5f5f5f]" />
                <div className="flex-[493]" />
                <Svg w={10} h={6}><path d="M0.500 0.500L5 5 9.500 0.500" stroke="#999" /></Svg>
              </div>
            </div>
            <StatusBar />
          </main>
          <div className="w-[2px] shrink-0 border-l border-[#383838]" />
          <Dock />
        </div>
      </div>
    </div>
  );
}
